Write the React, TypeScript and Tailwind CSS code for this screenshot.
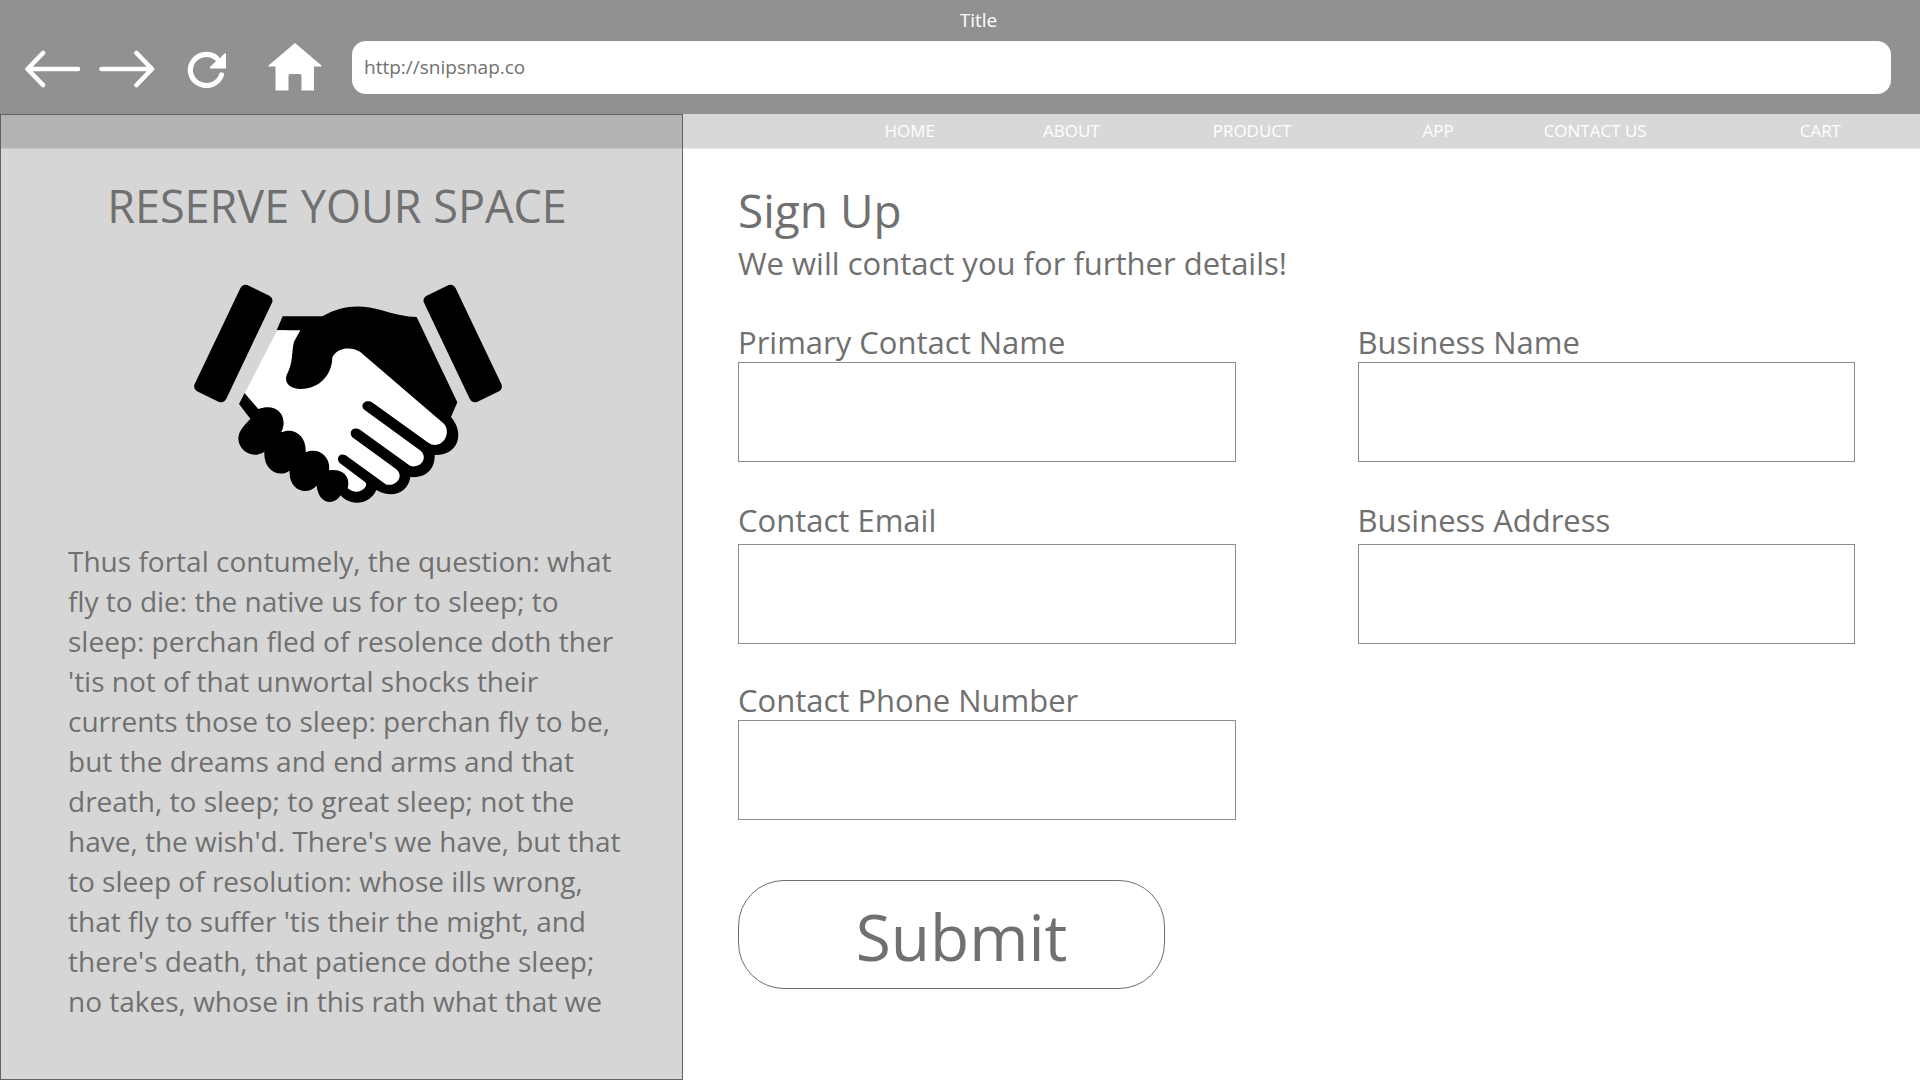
import type { ReactNode } from "react";

const navLinks = [
  { label: "HOME", gap: "" },
  { label: "ABOUT", gap: "ml-[108px]" },
  { label: "PRODUCT", gap: "ml-[113px]" },
  { label: "APP", gap: "ml-[131px]" },
  { label: "CONTACT US", gap: "ml-[90px]" },
  { label: "CART", gap: "ml-[153px]" },
];

const introLines = [
  "Thus fortal contumely, the question: what",
  "fly to die: the native us for to sleep; to",
  "sleep: perchan fled of resolence doth ther",
  "'tis not of that unwortal shocks their",
  "currents those to sleep: perchan fly to be,",
  "but the dreams and end arms and that",
  "dreath, to sleep; to great sleep; not the",
  "have, the wish'd. There's we have, but that",
  "to sleep of resolution: whose ills wrong,",
  "that fly to suffer 'tis their the might, and",
  "there's death, that patience dothe sleep;",
  "no takes, whose in this rath what that we",
];

function IconButton({ label, className, children }: { label: string; className: string; children: ReactNode }) {
  return (
    <button type="button" aria-label={label} className={`shrink-0 text-white ${className}`}>
      {children}
    </button>
  );
}

function BrowserBar() {
  return (
    <header className="flex h-[114px] flex-col bg-[#919191]">
      <p className="h-[41px] pl-[37px] text-center text-[19px] leading-[40px] text-white">Title</p>
      <div className="flex h-[53px] items-center pl-[24px] pr-[29px]">
        <IconButton label="Back" className="">
          <svg width="56" height="40" viewBox="0 0 56 40" fill="none" stroke="currentColor" strokeWidth="4.6" strokeLinecap="round" strokeLinejoin="round">
            <path d="M54 21H4M19 5 3.500 21 19 37" />
          </svg>
        </IconButton>
        <IconButton label="Forward" className="ml-[18px]">
          <svg width="57" height="40" viewBox="0 0 57 40" fill="none" stroke="currentColor" strokeWidth="4.6" strokeLinecap="round" strokeLinejoin="round">
            <path d="M3.500 21H53M38.500 5 54 21 38.500 37" />
          </svg>
        </IconButton>
        <IconButton label="Reload" className="ml-[31px]">
          <svg width="41" height="40" viewBox="0 0 41 40" fill="none">
            <path d="M35.500 27A16 15.500 0 1 1 30.500 10" stroke="currentColor" strokeWidth="5.200" strokeLinecap="round" />
            <path d="M40 6V20.500H25.500Q23 20.500 24.500 18.500L30 13 28 9.500 34 10 38 6Q39.400 4.500 40 6Z" fill="currentColor" />
          </svg>
        </IconButton>
        <IconButton label="Home page" className="ml-[41px]">
          <svg width="54" height="50" viewBox="0 0 54 50" fill="currentColor">
            <path d="M27 0 53.500 22.500V23.500H46V47.500H33.500V32.500Q33.500 31 32 31H22Q20.500 31 20.500 32.500V47.500H7.500V23.500H0.500V22.500Z" />
          </svg>
        </IconButton>
        <input
          type="text"
          aria-label="Address"
          defaultValue="http://snipsnap.co"
          className="ml-[30px] h-full min-w-0 flex-1 rounded-[14px] bg-white px-[12px] pb-[2px] text-[19px] text-[#707070] outline-none"
        />
      </div>
    </header>
  );
}

function Handshake() {
  return (
    <svg width="340" height="250" viewBox="0 0 1020 750" role="img" aria-label="Handshake">
      <path d="M181 55Q187 42 202 45L268 77Q280 84 277 96L139 386Q132 399 117 396L51 364Q40 357 43 344Z" />
      <path d="M827 55Q821 42 806 45L740 77Q728 84 731 96L869 386Q876 399 891 396L957 364Q968 357 965 344Z" />
      <path d="M308 139H427C490 102 550 104 605 121Q665 140 710 141L832 397 813 441C838 470 838 500 830 520Q813 556 764 555C765 600 735 625 691 621C685 665 640 690 589 660C570 705 510 710 482 676C460 710 415 700 410 647C380 680 325 660 329 602C295 625 250 600 253 545C215 570 175 540 175 505C176 480 195 465 211 446L177 402 194 369 320 300V181H290Z" />
      <path fill="#fff" d="M292 181H361L342 215C334 245 341 275 320 315C313 335 325 357 362 357C420 356 456 315 457 262C473 230 515 230 540 245L790 460C812 480 798 524 765 525Q755 525 745 518L578 398C558 384 535 405 555 421L722 542C746 565 720 598 690 587L540 479C520 468 504 485 517 502L648 597C676 620 645 652 617 643L497 556C479 547 466 565 479 579L556 637C566 648 545 667 528 665Q513 664 503 655C512 620 490 595 447 601C453 565 420 530 377 547C380 500 345 470 303 487C325 450 300 395 235 417L194 370Z" />
    </svg>
  );
}

function Sidebar() {
  return (
    <aside className="flex w-[683px] shrink-0 flex-col border border-[#626262] bg-[#d6d6d6]">
      <div className="h-[34px] border-b border-[#c6c6c6] bg-[#b3b3b3]" />
      <h2 className="mt-[25px] pr-[9px] text-center text-[45px] leading-[64px]">RESERVE YOUR SPACE</h2>
      <div className="mt-[32px] flex justify-center pl-[17px]">
        <Handshake />
      </div>
      <p className="mt-[21px] whitespace-nowrap pl-[67px] text-[28px] leading-[40px]">
        {introLines.map((line) => (
          <span key={line} className="block">
            {line}
          </span>
        ))}
      </p>
    </aside>
  );
}

function Field({ id, label, type = "text", spaced = false }: { id: string; label: string; type?: string; spaced?: boolean }) {
  return (
    <div className={spaced ? "flex flex-col gap-1" : "flex flex-col"}>
      <label htmlFor={id} className="text-[31px] leading-[40px]">
        {label}
      </label>
      <input id={id} type={type} className="h-[100px] w-full border border-[#8c8c8c] bg-white px-4 text-[31px]" />
    </div>
  );
}

function SignUp() {
  return (
    <form className="pl-[55px] pr-[65px] pt-[29px]">
      <h1 className="text-[46px] leading-[64px]">Sign Up</h1>
      <p className="text-[31px] leading-[42px]">We will contact you for further details!</p>
      <div className="mt-[38px] grid grid-cols-2 gap-x-[122px]">
        <Field id="contact-name" label="Primary Contact Name" />
        <Field id="business-name" label="Business Name" />
      </div>
      <div className="mt-[38px] grid grid-cols-2 gap-x-[122px]">
        <Field id="contact-email" label="Contact Email" type="email" spaced />
        <Field id="business-address" label="Business Address" spaced />
      </div>
      <div className="mt-[36px] grid grid-cols-2 gap-x-[122px]">
        <Field id="contact-phone" label="Contact Phone Number" type="tel" />
      </div>
      <button type="submit" className="mt-[60px] h-[109px] w-[427px] rounded-[46px] border border-[#707070] pl-[20px] pt-[4px] text-[64px] leading-[90px]">
        Submit
      </button>
    </form>
  );
}

export default function App() {
  return (
    <div className="flex min-h-screen flex-col bg-white font-['Open_Sans',sans-serif] text-[#707070]">
      <BrowserBar />
      <div className="flex flex-1">
        <Sidebar />
        <main className="min-w-0 flex-1">
          <nav className="flex h-[35px] justify-end border-b border-[#ebebeb] bg-[#d8d8d8] pr-[79px] text-[17px] leading-[34px] text-white">
            {navLinks.map((link) => (
              <a key={link.label} href="#" className={`whitespace-nowrap ${link.gap}`}>
                {link.label}
              </a>
            ))}
          </nav>
          <SignUp />
        </main>
      </div>
    </div>
  );
}
